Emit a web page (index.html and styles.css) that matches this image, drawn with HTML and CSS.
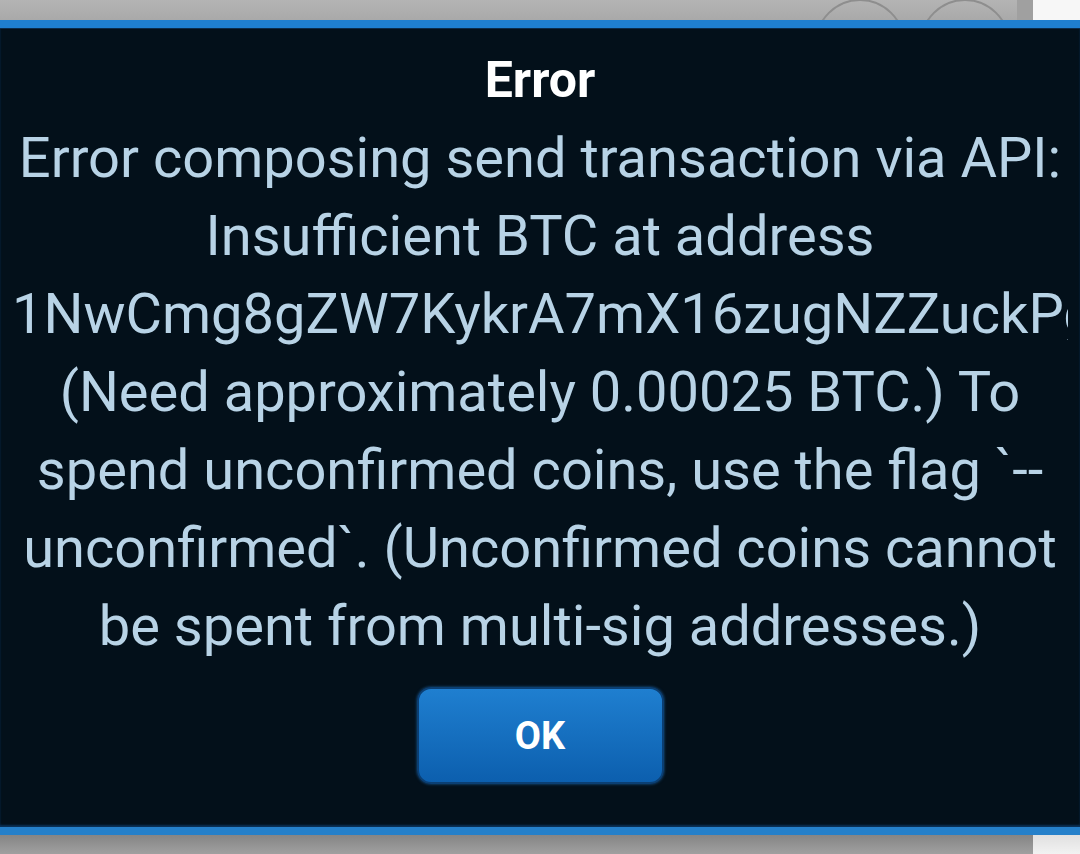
FILE: index.html
```html
<!DOCTYPE html>
<html>
<head>
    <meta charset='utf-8'>
    <title>Error</title>
    <meta name='viewport' content='width=device-width, initial-scale=1'>
    <link rel="stylesheet" href="styles.css">
</head>
<body>
    <div class="backdrop backdrop-top">
        <div class="backdrop-main">
            <span class="ring"></span>
            <span class="ring"></span>
        </div>
        <div class="backdrop-edge"></div>
        <div class="backdrop-side"></div>
    </div>

    <div class="dialog">
        <h1 class="dialog-title">Error</h1>
        <p class="dialog-message">Error composing send transaction via API: Insufficient BTC at address 1NwCmg8gZW7KykrA7mX16zugNZZuckPgvq (Need approximately 0.00025 BTC.) To spend unconfirmed coins, use the flag `--unconfirmed`. (Unconfirmed coins cannot be spent from multi-sig addresses.)</p>
        <div class="dialog-actions">
            <button class="btn-ok">OK</button>
        </div>
    </div>

    <div class="backdrop backdrop-bottom">
        <div class="backdrop-main"></div>
        <div class="backdrop-side"></div>
    </div>
</body>
</html>
```

FILE: styles.css
```css
* {
    margin: 0;
    padding: 0;
    box-sizing: border-box;
}

body {
    width: 1080px;
    height: 854px;
    overflow: hidden;
    background: #03101a;
    font-family: Roboto, "Liberation Sans", sans-serif;
}

.backdrop {
    display: flex;
    height: 20px;
}

.backdrop-main {
    flex: 1;
    display: flex;
    justify-content: flex-end;
    gap: 15px;
    padding-right: 7px;
    overflow: hidden;
    background: linear-gradient(#b4b4b4, #a9a9a9);
}

.backdrop-edge {
    width: 16px;
    background: #a0a0a0;
}

.backdrop-side {
    width: 47px;
    background: #f7f7f7;
}

.ring {
    flex-shrink: 0;
    width: 90px;
    height: 90px;
    margin-top: -1px;
    border: 2px solid #8e8e8e;
    border-radius: 50%;
}

.backdrop-bottom {
    height: 19px;
}

.backdrop-bottom .backdrop-main {
    background: linear-gradient(#858585, #a0a0a0);
}

.backdrop-bottom .backdrop-side {
    background: linear-gradient(#e0e0e0, #f2f2f2);
}

.dialog {
    height: 815px;
    border-top: 8px solid #1f7fd0;
    border-bottom: 8px solid #2580ca;
    background: #03101a;
    box-shadow: inset 0 1px 0 #0c2b4a, inset 0 -2px 2px #0b3258;
    text-align: center;
    padding: 0 12px;
}

.dialog-title {
    margin-top: 24px;
    font-size: 50px;
    font-weight: bold;
    line-height: 56px;
    color: #ffffff;
}

.dialog-message {
    margin-top: 11px;
    overflow: hidden;
    font-size: 56px;
    line-height: 78px;
    color: #b8d3e6;
}

.dialog-actions {
    display: flex;
    justify-content: center;
    margin-top: 22px;
}

.btn-ok {
    width: 247px;
    height: 97px;
    border: 2px solid #0b3f73;
    border-radius: 14px;
    background: linear-gradient(#1f7fd0, #0c5fae);
    box-shadow: 0 0 3px #1b5d9a;
    color: #ffffff;
    font-family: Roboto, "Liberation Sans", sans-serif;
    font-size: 38px;
    font-weight: bold;
}
```
